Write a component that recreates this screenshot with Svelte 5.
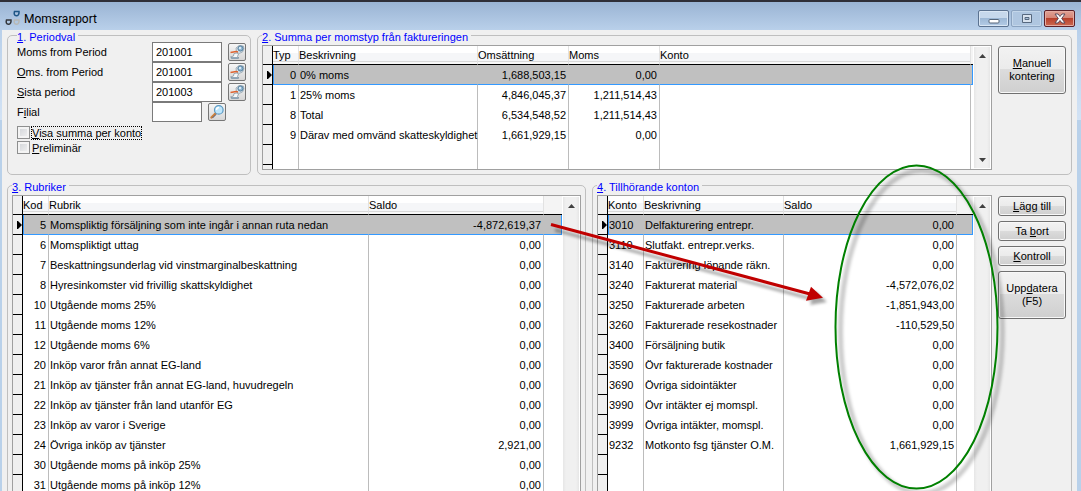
<script>
	// "&" in a label marks the access key that follows it.
	const periods = [
		{ id: 'moms', label: 'Moms from Period', value: '201001' },
		{ id: 'oms', label: '&Oms. from Period', value: '201001' },
		{ id: 'sista', label: '&Sista period', value: '201003' }
	];

	const summary = {
		cols: [
			{ title: 'Typ', width: 26, align: 'right' },
			{ title: 'Beskrivning', width: 179 },
			{ title: 'Omsättning', width: 91, align: 'right' },
			{ title: 'Moms', width: 91, align: 'right' },
			{ title: 'Konto' }
		],
		spare: 2,
		rows: [
			['0', '0% moms', '1,688,503,15', '0,00', ''],
			['1', '25% moms', '4,846,045,37', '1,211,514,43', ''],
			['8', 'Total', '6,534,548,52', '1,211,514,43', ''],
			['9', 'Därav med omvänd skatteskyldighet', '1,661,929,15', '0,00', '']
		],
		blank: 1
	};

	const headings = {
		cols: [
			{ title: 'Kod', width: 26, align: 'right' },
			{ title: 'Rubrik' },
			{ title: 'Saldo', width: 175, align: 'right' }
		],
		spare: 18,
		rows: [
			['5', 'Momspliktig försäljning som inte ingår i annan ruta nedan', '-4,872,619,37'],
			['6', 'Momspliktigt uttag', '0,00'],
			['7', 'Beskattningsunderlag vid vinstmarginalbeskattning', '0,00'],
			['8', 'Hyresinkomster vid frivillig skattskyldighet', '0,00'],
			['10', 'Utgående moms 25%', '0,00'],
			['11', 'Utgående moms 12%', '0,00'],
			['12', 'Utgående moms 6%', '0,00'],
			['20', 'Inköp varor från annat EG-land', '0,00'],
			['21', 'Inköp av tjänster från annat EG-land, huvudregeln', '0,00'],
			['22', 'Inköp av tjänster från land utanför EG', '0,00'],
			['23', 'Inköp av varor i Sverige', '0,00'],
			['24', 'Övriga inköp av tjänster', '2,921,00'],
			['30', 'Utgående moms på inköp 25%', '0,00'],
			['31', 'Utgående moms på inköp 12%', '0,00']
		],
		blank: 2
	};

	const accounts = {
		cols: [
			{ title: 'Konto', width: 36 },
			{ title: 'Beskrivning', width: 140 },
			{ title: 'Saldo', align: 'right' }
		],
		spare: 16,
		rows: [
			['3010', 'Delfakturering entrepr.', '0,00'],
			['3110', 'Slutfakt. entrepr.verks.', '0,00'],
			['3140', 'Fakturering löpande räkn.', '0,00'],
			['3240', 'Fakturerat material', '-4,572,076,02'],
			['3250', 'Fakturerade arbeten', '-1,851,943,00'],
			['3260', 'Fakturerade resekostnader', '-110,529,50'],
			['3400', 'Försäljning butik', '0,00'],
			['3590', 'Övr fakturerade kostnader', '0,00'],
			['3690', 'Övriga sidointäkter', '0,00'],
			['3990', 'Övr intäkter ej momspl.', '0,00'],
			['3999', 'Övriga intäkter, momspl.', '0,00'],
			['9232', 'Motkonto fsg tjänster O.M.', '1,661,929,15']
		],
		blank: 4
	};

	function split(label) {
		const i = label.indexOf('&');
		if (i < 0) return [label, '', ''];
		return [label.slice(0, i), label[i + 1], label.slice(i + 2)];
	}
</script>

{#snippet mnemonic(label)}
	{@const [before, key, after] = split(label)}
	{before}{#if key}<u>{key}</u>{/if}{after}
{/snippet}

{#snippet grid(data, name, closed)}
	<div class="grid">
		<table aria-label={name}>
			<colgroup>
				<col class="mark-col" />
				{#each data.cols as col}
					<col style:width={col.width ? `${col.width}px` : null} />
				{/each}
				<col style:width="{data.spare}px" />
			</colgroup>
			<thead>
				<tr>
					<th class="mark"></th>
					{#each data.cols as col}
						<th>{col.title}</th>
					{/each}
					<th class="spare"></th>
				</tr>
			</thead>
			<tbody>
				{#each data.rows as row, i}
					<tr class:selected={i === 0}>
						<td class="mark">
							{#if i === 0}
								<svg width="5" height="8" viewBox="0 0 5 8"><path d="M0 0h1l4 4-4 4H0z" /></svg>
							{/if}
						</td>
						{#each row as cell, c}
							<td class:right={data.cols[c].align === 'right'}>{cell}</td>
						{/each}
						<td class="spare"></td>
					</tr>
				{/each}
				{#each Array(data.blank) as _}
					<tr>
						<td class="mark"></td>
						{#each data.cols as _col}<td></td>{/each}
						<td class="spare"></td>
					</tr>
				{/each}
				{#if closed}
					<tr class="rest">
						<td class="mark"></td>
						{#each data.cols as _col}<td></td>{/each}
						<td class="spare"></td>
					</tr>
				{/if}
			</tbody>
		</table>
		<div class="scroll">
			<button type="button" aria-label="Upp">
				<svg width="7" height="4" viewBox="0 0 7 4"><path d="M3.5 0L7 4H0z" /></svg>
			</button>
			<button type="button" aria-label="Ned">
				<svg width="7" height="4" viewBox="0 0 7 4"><path d="M0 0h7L3.5 4z" /></svg>
			</button>
		</div>
	</div>
{/snippet}

<div class="window">
	<header>
		<svg class="logo" width="16" height="17" viewBox="0 0 16 17" fill="none" stroke-width="1.5">
			<path d="M9.500 1.500h4.500c.3 2.500-.8 4.300-2.700 4.300S8.700 4 9.500 1.500z" stroke="#1d5585" />
			<path d="M1.500 10h4.500c.3 2.500-.8 4.300-2.700 4.300S.7 12.500 1.500 10z" stroke="#33363b" />
			<path d="M9.500 10h4.500c.3 2.500-.8 4.300-2.700 4.300S8.700 12.500 9.500 10z" stroke="#b8b8b4" />
		</svg>
		<h1>Momsrapport</h1>
		<div class="controls">
			<button type="button" aria-label="Minimera">
				<svg width="12" height="13" viewBox="0 0 12 13"><rect x="1" y="7.500" width="10" height="3.500" rx="1" fill="#fff" stroke="#54657a" /></svg>
			</button>
			<button type="button" class="dim" aria-label="Maximera">
				<svg width="12" height="13" viewBox="0 0 12 13"><path d="M1.500 2.500h9v8h-9z" fill="#d8e2ee" stroke="#56687f" /><path d="M4 5.500h4v2H4z" fill="#a9bfd8" stroke="#56687f" /></svg>
			</button>
			<button type="button" class="close" aria-label="Stäng">
				<svg width="14" height="13" viewBox="0 0 14 13"><path d="M2 2h3l2 2.500L9 2h3L8.700 6.500 12 11H9L7 8.500 5 11H2l3.300-4.500z" fill="#fff" stroke="#5a4a5c" /></svg>
			</button>
		</div>
	</header>

	<main>
		<div class="upper">
			<fieldset class="period">
				<legend>{@render mnemonic('&1. Periodval')}</legend>
				{#each periods as p}
					<div class="field">
						<label for={p.id}>{@render mnemonic(p.label)}</label>
						<input id={p.id} type="text" value={p.value} />
						<button type="button" class="tool" aria-label="Välj period">
							<svg width="16" height="16" viewBox="0 0 16 16">
								<path d="M7 4l3-2.500 4.500.5.500 3-1.500 3L10 9.500 7.500 8z" fill="#dbe3e9" stroke="#94a3af" stroke-width=".8" />
								<circle cx="11.500" cy="4.500" r="2.600" fill="#8fb8d4" stroke="#4f7896" stroke-width=".9" />
								<circle cx="11" cy="4" r="1" fill="#f4fbff" />
								<path d="M1.500 8.500L7 7.500l2 .5" fill="none" stroke="#e0632f" stroke-width="1.400" />
								<path d="M5 9.500l3-.5 1.500 1-1 2.500 1.500 1.500H3L1.500 13l3-1z" fill="#f6f8f9" stroke="#8b959e" stroke-width=".8" />
								<path d="M2 14h7.500" stroke="#6f8fa8" stroke-width="1.200" />
							</svg>
						</button>
					</div>
				{/each}
				<div class="field">
					<label for="filial">{@render mnemonic('F&ilial')}</label>
					<input id="filial" class="short" type="text" />
					<button type="button" class="tool" aria-label="Sök filial">
						<svg width="16" height="16" viewBox="0 0 16 16">
							<path d="M2.500 13.500l4-4" stroke="#c97f3c" stroke-width="2.400" stroke-linecap="round" />
							<path d="M3.500 14l3.500-3.500" stroke="#4a5f8c" stroke-width="1" />
							<circle cx="9.800" cy="5.900" r="4.300" fill="#bfe6fb" stroke="#5b9ac4" stroke-width="1.200" />
							<path d="M7.500 6a2.500 2.500 0 0 1 2.500-2.500" fill="none" stroke="#fff" stroke-width="1.500" />
						</svg>
					</button>
				</div>
				<div class="checks">
					<label class="focused"><input type="checkbox" /><span>{@render mnemonic('&Visa summa per konto')}</span></label>
					<label><input type="checkbox" /><span>{@render mnemonic('&Preliminär')}</span></label>
				</div>
			</fieldset>

			<fieldset class="panel">
				<legend>{@render mnemonic('&2. Summa per momstyp från faktureringen')}</legend>
				<div class="body">
					{@render grid(summary, 'Summa per momstyp', true)}
					<div class="actions">
						<button type="button" class="tall">{@render mnemonic('&Manuell')}<br />kontering</button>
					</div>
				</div>
			</fieldset>
		</div>

		<div class="lower">
			<fieldset class="panel">
				<legend>{@render mnemonic('&3. Rubriker')}</legend>
				<div class="body">
					{@render grid(headings, 'Rubriker', false)}
				</div>
			</fieldset>

			<fieldset class="panel accounts">
				<legend>{@render mnemonic('&4. Tillhörande konton')}</legend>
				<div class="body">
					{@render grid(accounts, 'Tillhörande konton', false)}
					<div class="actions">
						<button type="button">{@render mnemonic('&Lägg till')}</button>
						<button type="button">{@render mnemonic('Ta &bort')}</button>
						<button type="button">{@render mnemonic('&Kontroll')}</button>
						<button type="button" class="tall">{@render mnemonic('Upp&datera')}<br />(F5)</button>
					</div>
				</div>
			</fieldset>
		</div>
	</main>

	<!-- Marks drawn on top of the form -->
	<svg class="notes" width="1081" height="491" viewBox="0 0 1081 491" aria-hidden="true">
		<defs>
			<filter id="soft" x="-10%" y="-10%" width="120%" height="120%">
				<feGaussianBlur stdDeviation="1.5" />
			</filter>
		</defs>
		<g filter="url(#soft)" opacity=".35">
			<path d="M555 230L812 299" stroke="#000" stroke-width="3" />
			<path d="M827 302l-12-11-5 14z" />
		</g>
		<ellipse cx="921.500" cy="332" rx="81" ry="161.500" fill="none" stroke="#000" stroke-opacity=".2" stroke-width="5" filter="url(#soft)" />
		<ellipse cx="916.500" cy="327" rx="81" ry="161.500" fill="none" stroke="#008000" stroke-width="2" />
		<path d="M551 224.500L810 294" stroke="#c00000" stroke-width="3" />
		<path d="M823 297.700l-12-11-5 14z" fill="#c00000" />
	</svg>
</div>

<style>
	:global(body) {
		overflow: hidden;
	}
	.window {
		position: relative;
		box-sizing: border-box;
		height: 100vh;
		overflow: hidden;
		padding: 0 4px 0 2px;
		border-top: 2px solid #2f2f38;
		background: linear-gradient(#9ab4d4, #b9d0ea 28px, #d3e3f5 118px, #b9d1ea 118px);
		color: #000;
		font: 11px/14px 'Liberation Sans', Tahoma, sans-serif;
	}
	button,
	input {
		box-sizing: border-box;
		margin: 0;
		padding: 0;
		font: inherit;
		color: inherit;
	}
	header {
		display: flex;
		align-items: center;
		height: 28px;
		padding: 0 0 0 3px;
	}
	.logo {
		flex: none;
		margin-top: 4px;
	}
	h1 {
		flex: 1;
		margin: 5px 0 0 3px;
		font: 12px/16px Roboto, 'Noto Sans', sans-serif;
	}
	.controls {
		display: flex;
		gap: 2px;
		margin: 5px 2px 0 0;
	}
	.controls button {
		display: flex;
		align-items: center;
		justify-content: center;
		width: 31px;
		height: 17px;
		border: 1px solid #5b7290;
		border-radius: 2px;
		background: linear-gradient(#c6d8ec 50%, #9db8d6 50%, #b4cce6);
		box-shadow: inset 0 0 0 1px #d9e6f4;
	}
	.controls .dim {
		border-color: #8ba3c0;
		background: #afc6e0;
		box-shadow: inset 0 0 0 1px #c3d6ea;
	}
	.controls .close {
		border-color: #5c2028;
		background: linear-gradient(#e0a195, #d48273 50%, #b8402c 50%, #cc6a52);
		box-shadow: inset 0 0 0 1px #e5aca2;
	}
	main {
		display: flex;
		flex-direction: column;
		gap: 5px;
		padding: 0 5px;
		background: #f0f0f0;
	}
	.upper,
	.lower {
		display: flex;
		gap: 6px;
	}
	fieldset {
		box-sizing: border-box;
		min-width: 0;
		margin: 0;
		border: 1px solid #bfbfbf;
		border-radius: 5px;
	}
	legend {
		height: 11px;
		padding: 0 3px 0 0;
		color: #00f;
	}
	.period {
		flex: none;
		width: 244px;
		padding: 1px 4px 0 9px;
	}
	.panel {
		flex: 1;
		padding: 4px;
	}
	.accounts {
		flex: none;
		width: 480px;
	}
	.field {
		display: flex;
		align-items: center;
		height: 20px;
	}
	.field label {
		width: 135px;
	}
	.field input {
		width: 70px;
		height: 20px;
		padding: 0 3px;
		border: 1px solid #7a7a7a;
		background: #fff;
	}
	.field .short {
		width: 50px;
	}
	.tool {
		width: 18px;
		height: 18px;
		margin-left: 6px;
		border: 1px solid #777;
		border-radius: 2px;
		background: linear-gradient(#f6f6f6, #d6d6d6);
	}
	.tool svg {
		display: block;
	}
	.checks {
		display: flex;
		flex-direction: column;
		padding-top: 3px;
	}
	.checks label {
		display: flex;
		align-items: center;
		gap: 1px;
		height: 15px;
	}
	.checks input {
		appearance: none;
		width: 13px;
		height: 13px;
		border: 1px solid #8e8f8f;
		background: linear-gradient(135deg, #cfd2d6, #f4f4f4);
		box-shadow: inset 0 0 0 2px #f4f4f4;
	}
	.checks span {
		padding: 0 1px;
	}
	.checks .focused span {
		outline: 1px dotted #000;
		outline-offset: -1px;
	}
	.body {
		display: flex;
		align-items: stretch;
		gap: 6px;
	}
	.grid {
		display: flex;
		flex: 1;
		min-width: 0;
		border: 1px solid #a0a0a0;
		background: #fff;
	}
	table {
		flex: 1;
		width: 100%;
		min-width: 0;
		table-layout: fixed;
		border-collapse: separate;
		border-spacing: 0;
	}
	.mark-col {
		width: 10px;
	}
	th,
	td {
		box-sizing: border-box;
		padding: 0;
		white-space: nowrap;
		text-align: left;
		font-weight: normal;
	}
	th {
		height: 19px;
		border-right: 1px solid #e2e2e2;
		border-bottom: 1px solid #000;
		background: linear-gradient(#fff 7px, #f5f6f8 7px, #f5f6f8 15px, #d8d8d8 15px, #d8d8d8 16px, #f8f8f8 16px);
	}
	td {
		height: 20px;
		padding: 0 2px 0 1px;
		border-right: 1px solid #bcbcbc;
	}
	td.right {
		text-align: right;
	}
	th.mark,
	td.mark {
		padding: 0;
		border-right: 1px solid #000;
		border-bottom: 1px solid #000;
		background: #f0f0f0;
	}
	.mark svg {
		display: block;
		margin-left: 4px;
	}
	th.spare {
		border-right: 0;
		background: #f4f4f4;
	}
	td.spare {
		padding: 0;
		border-right: 0;
	}
	.selected td:not(.mark) {
		padding-top: 1px;
		border-right-color: #c0c0c0;
		border-bottom: 1px solid #39f;
		background: #c0c0c0;
	}
	.selected .mark + td {
		padding-left: 0;
		border-left: 1px solid #39f;
	}
	.selected td.spare {
		border-right: 1px solid #39f;
	}
	.rest td,
	.rest td.mark {
		height: 4px;
		border-bottom: 0;
	}
	.scroll {
		display: flex;
		flex: none;
		flex-direction: column;
		justify-content: space-between;
		width: 16px;
		margin: 1px;
		background: linear-gradient(90deg, #e6e6e6, #f0f0f0 3px, #f0f0f0 13px, #e6e6e6);
	}
	.scroll button {
		display: flex;
		align-items: center;
		justify-content: center;
		height: 17px;
		border: 0;
		background: none;
		fill: #404040;
	}
	.actions {
		display: flex;
		flex: none;
		flex-direction: column;
		gap: 5px;
		width: 69px;
		padding: 1px 1px 0 0;
		box-sizing: border-box;
	}
	.actions button {
		height: 20px;
		border: 1px solid #707070;
		border-radius: 3px;
		background: linear-gradient(#f2f2f2, #ebebeb 48%, #dcdcdc 48%, #cfcfcf);
		box-shadow: inset 0 0 0 1px #f8f8f8;
		line-height: 13px;
	}
	.actions .tall {
		height: 48px;
	}
	.notes {
		position: absolute;
		top: -2px;
		left: 0;
		pointer-events: none;
	}
</style>
